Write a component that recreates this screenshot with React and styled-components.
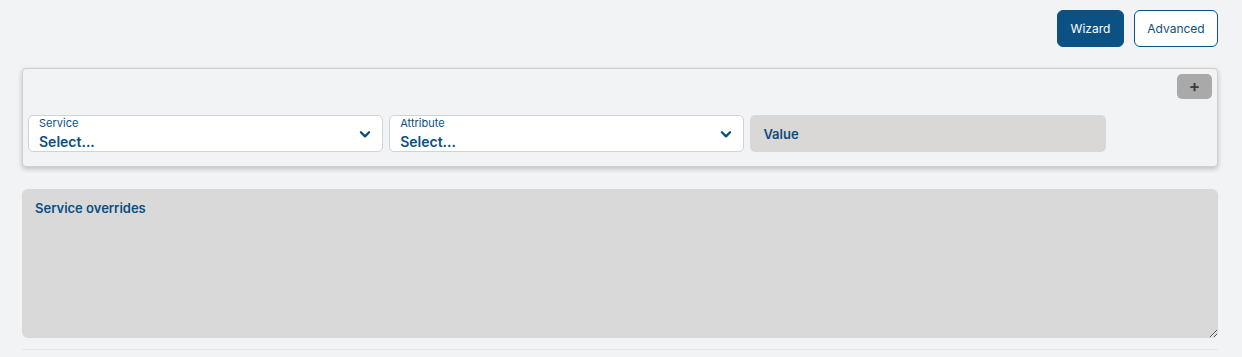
import styled, { createGlobalStyle } from "styled-components";

const GlobalStyle = createGlobalStyle`
  body {
    margin: 0;
    background: #f2f3f5;
    font-family: Inter, "Noto Sans", sans-serif;
  }
`;

const Page = styled.div`
  padding: 10px 24px 0 22px;
  display: flex;
  flex-direction: column;
`;

const Toolbar = styled.div`
  display: flex;
  justify-content: flex-end;
  gap: 10px;
`;

const ModeButton = styled.button`
  width: ${p => p.$w}px;
  height: 37px;
  padding: 0;
  border-radius: 6px;
  font-family: inherit;
  font-size: 12px;
  border: 1px solid #0b5184;
  background: ${p => (p.$active ? "#0b5184" : "#ffffff")};
  color: ${p => (p.$active ? "#ffffff" : "#0b5184")};
  cursor: pointer;
`;

const Card = styled.div`
  margin-top: 21px;
  border: 1px solid #d0d0d0;
  border-radius: 4px;
  background: #f2f3f5;
  box-shadow: 0 2px 5px rgba(0, 0, 0, 0.22);
  padding: 5px 5px 14px 5px;
  display: flex;
  flex-direction: column;
`;

const CardHead = styled.div`
  display: flex;
  justify-content: flex-end;
`;

const AddButton = styled.button`
  width: 35px;
  height: 25px;
  border: none;
  border-radius: 5px;
  background: #a9a9a9;
  color: #3a3a3a;
  font-size: 17px;
  font-weight: 600;
  line-height: 1;
  padding: 0;
  font-family: inherit;
`;

const FieldRow = styled.div`
  margin-top: 16px;
  display: flex;
  gap: 6px;
`;

const SelectBox = styled.div`
  width: 30%;
  height: 37px;
  box-sizing: border-box;
  background: #fff;
  border: 1px solid #cfd2d6;
  border-radius: 5px;
  padding: 0 10px 0 10px;
  display: flex;
  align-items: center;
  justify-content: space-between;
  color: #0b4f80;
`;

const SelectText = styled.div`
  display: flex;
  flex-direction: column;
`;

const SelectLabel = styled.span`
  font-size: 11px;
  line-height: 13px;
  margin-top: -1px;
`;

const SelectValue = styled.span`
  font-size: 14px;
  font-weight: 600;
  line-height: 20px;
  margin-top: 2px;
  margin-bottom: -3px;
`;

const ValueBox = styled.div`
  width: 30%;
  height: 37px;
  box-sizing: border-box;
  background: #d9d8d6;
  border-radius: 5px;
  padding: 0 13px;
  display: flex;
  align-items: center;
  font-size: 13px;
  font-weight: 600;
  color: #0b4f80;
`;

const Overrides = styled.textarea`
  margin-top: 22px;
  height: 149px;
  box-sizing: border-box;
  border: none;
  border-radius: 6px;
  background: #d9d9d9;
  padding: 11px 13px;
  font-family: inherit;
  font-size: 13px;
  font-weight: 600;
  color: #0b4f80;
  resize: vertical;
  &::placeholder {
    color: #0b4f80;
  }
`;

const Rule = styled.div`
  margin-top: 11px;
  border-top: 1px solid #e6e7e9;
`;

const Chevron = () => (
  <svg width="14" height="14" viewBox="0 0 24 24" fill="none" stroke="#0b4f80" strokeWidth="4" strokeLinecap="round" strokeLinejoin="round">
    <path d="M5 9l7 7 7-7" />
  </svg>
);

function Select({ label }) {
  return (
    <SelectBox>
      <SelectText>
        <SelectLabel>{label}</SelectLabel>
        <SelectValue>Select...</SelectValue>
      </SelectText>
      <Chevron />
    </SelectBox>
  );
}

export default function App() {
  return (
    <>
      <GlobalStyle />
      <Page>
        <Toolbar>
          <ModeButton $active $w={67}>Wizard</ModeButton>
          <ModeButton $w={84}>Advanced</ModeButton>
        </Toolbar>
        <Card>
          <CardHead>
            <AddButton>+</AddButton>
          </CardHead>
          <FieldRow>
            <Select label="Service" />
            <Select label="Attribute" />
            <ValueBox>Value</ValueBox>
          </FieldRow>
        </Card>
        <Overrides placeholder="Service overrides" />
        <Rule />
      </Page>
    </>
  );
}
